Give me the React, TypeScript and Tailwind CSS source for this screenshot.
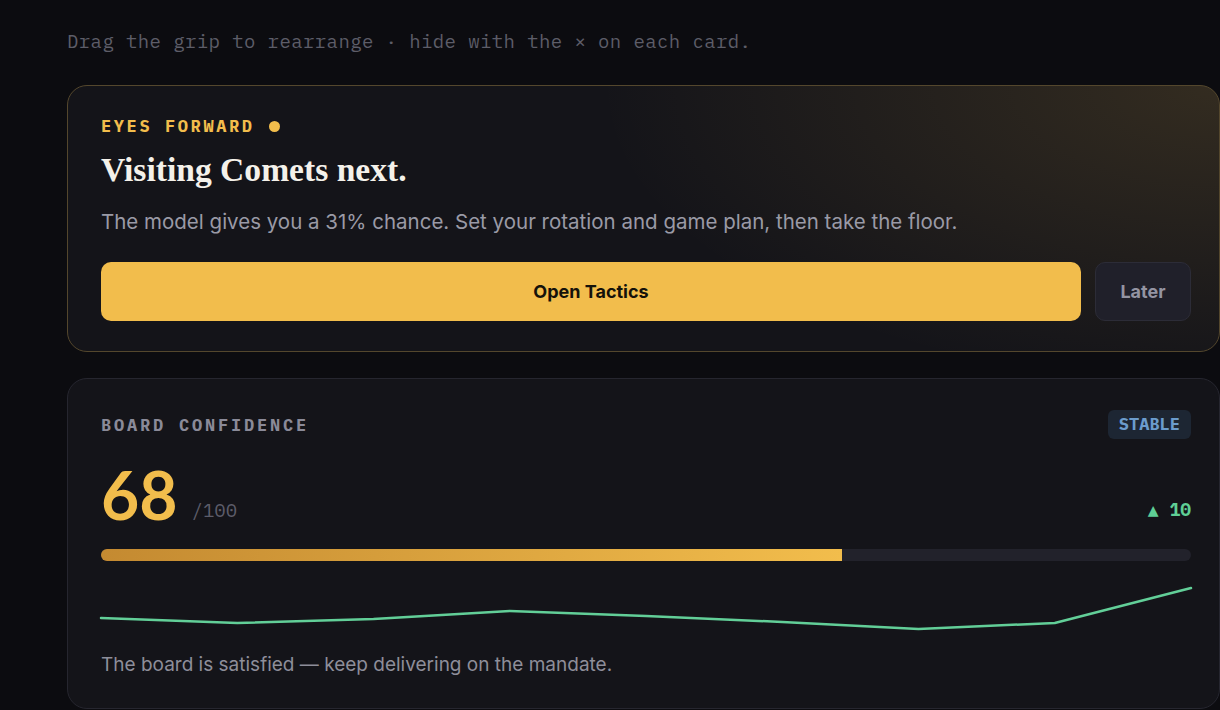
import React from "react";

const mono = "font-['IBM_Plex_Mono','DejaVu_Sans_Mono','Liberation_Mono',monospace]";
const sans = "font-['Inter','Noto_Sans','Liberation_Sans',sans-serif]";
const serif = "font-['Liberation_Serif','DejaVu_Serif',serif]";

const pts = [618, 623, 619, 611, 616, 622, 629, 623, 588];

function Spark() {
  const w = 1090;
  const step = w / (pts.length - 1);
  const d = pts.map((y, i) => `${i === 0 ? "M" : "L"}${(i * step).toFixed(1)},${y - 570}`).join(" ");
  return (
    <svg width={w} height={70} viewBox={`0 0 ${w} 70`} className="block overflow-visible">
      <path d={d} fill="none" stroke="#62cf98" strokeWidth={2.5} strokeLinejoin="round" strokeLinecap="round" />
    </svg>
  );
}

export default function App() {
  return (
    <div className="w-[1220px] h-[710px] overflow-hidden bg-[#0c0c10] pl-[67px] pt-[29px]">
      <p className={`${mono} text-[19px] leading-[24px] tracking-[0.4px] text-[#5d5d68]`}>
        Drag the grip to rearrange · hide with the × on each card.
      </p>

      <div className="mt-[32px] w-[1153px] rounded-[20px] border border-[#54472d] bg-[#141419] bg-[radial-gradient(ellipse_620px_300px_at_100%_0%,rgba(242,189,76,0.14),rgba(242,189,76,0)_100%)] pl-[33px] pr-[28px] pt-[28px] pb-[30px]">
        <div className="flex items-center">
          <span className={`${mono} text-[17px] leading-[24px] font-bold tracking-[2.6px] text-[#f2bd4c]`}>EYES FORWARD</span>
          <span className="ml-[14px] w-[11px] h-[11px] rounded-full bg-[#f2bd4c]" />
        </div>
        <h2 className={`${serif} mt-[12px] text-[33.6px] leading-[40px] font-bold text-[#f4f1ea]`}>Visiting Comets next.</h2>
        <p className={`${sans} mt-[18px] text-[20.5px] leading-[28px] text-[#9a9aa6]`}>
          The model gives you a 31% chance. Set your rotation and game plan, then take the floor.
        </p>
        <div className="mt-[26px] flex gap-[14px]">
          <button className={`${sans} flex-1 h-[59px] rounded-[10px] bg-[#f2bd4c] text-[18px] font-bold text-[#15120a]`}>Open Tactics</button>
          <button className={`${sans} w-[96px] h-[59px] rounded-[10px] border border-[#2c2c37] bg-[#20202a] text-[18px] font-bold text-[#9494a2]`}>Later</button>
        </div>
      </div>

      <div className="mt-[26px] w-[1153px] h-[331px] rounded-[20px] border border-[#26262f] bg-[#141419] pl-[33px] pr-[28px] pt-[31px]">
        <div className="flex items-center justify-between h-[29px]">
          <span className={`${mono} mt-[2px] text-[17px] font-bold tracking-[2.8px] text-[#8a8a98]`}>BOARD CONFIDENCE</span>
          <span className={`${mono} h-[29px] px-[11px] flex items-center rounded-[6px] bg-[#1d2633] text-[17px] font-bold text-[#6b9ccc]`}>STABLE</span>
        </div>
        <div className="mt-[24px] flex items-end justify-between h-[64px]">
          <div className="flex items-baseline">
            <span className={`font-['Lato','Noto_Sans',sans-serif] text-[66px] leading-[64px] font-bold text-[#f2bd4c]`}>68</span>
            <span className={`${mono} ml-[14px] relative top-[-3px] text-[19px] text-[#5d5d6a]`}>/100</span>
          </div>
          <span className={`${mono} mb-[4px] text-[18px] font-bold text-[#5fcf95]`}>▲ 10</span>
        </div>
        <div className="mt-[22px] h-[12px] w-full rounded-full bg-[#22222b] overflow-hidden">
          <div className="h-full bg-[linear-gradient(90deg,#c48a31,#f2bd4c)]" style={{ width: "68%" }} />
        </div>
        <div className="mt-[9px]">
          <Spark />
        </div>
        <p className={`${sans} mt-[11px] text-[19px] leading-[28px] text-[#8e8e9a]`}>
          The board is satisfied — keep delivering on the mandate.
        </p>
      </div>
    </div>
  );
}
